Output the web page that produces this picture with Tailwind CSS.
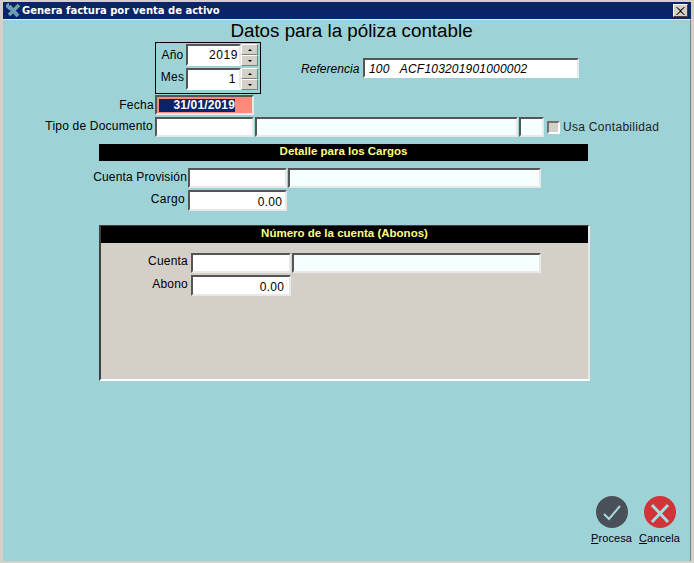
<!DOCTYPE html>
<html lang="en">
<head>
    <meta charset="UTF-8">
    <title>Genera factura por venta de activo</title>
    <script src="https://cdn.jsdelivr.net/npm/@tailwindcss/browser@4"></script>
</head>
<body class="overflow-hidden">
<div class="w-[694px] h-[563px] bg-[#d4d0c8] pt-[2px] pl-[3px] pr-[3px] pb-[2px] flex flex-col font-['Liberation_Sans',sans-serif] text-[12px] leading-[14px] text-black">

    <!-- Title bar -->
    <div class="h-[17px] shrink-0 bg-[#0a246a] flex items-center justify-between pr-[3px] text-white">
        <div class="flex items-center">
            <svg class="w-[17px] h-[17px] ml-[2px]" viewBox="0 0 17 17">
                <path d="M4 4l9 10" fill="none" stroke="#6f9fb5" stroke-width="4"/>
                <path d="M14 3l-10 10" fill="none" stroke="#6f9fb5" stroke-width="3.500"/>
                <path d="M1 3l2-2 1 0 0 3 2-1 1 3-3 2-3-3z" fill="#6f9fb5"/>
            </svg>
            <span class="font-['DejaVu_Sans',sans-serif] font-bold text-[10px]">Genera factura por venta de activo</span>
        </div>
        <div class="w-[15px] h-[13px] bg-[#d4d0c8] border border-t-white border-l-white border-r-[#404040] border-b-[#404040] flex items-center justify-center">
            <svg class="w-[9px] h-[8px]" viewBox="0 0 9 8"><path d="M1 0l3.500 3 3.500-3 1 0-4 4 4 4-1 0-3.500-3-3.500 3-1 0 4-4-4-4z" fill="#000"/></svg>
        </div>
    </div>

    <!-- Form body -->
    <div class="flex-1 bg-[#9dd3d6] border-t border-t-[#e8e8e8] border-r border-r-[#808080] flex flex-col">
        <h1 class="text-[18.8px] leading-[21px] text-center pl-[10px]">Datos para la póliza contable</h1>

        <!-- Periodo + referencia -->
        <div class="flex mt-[1px] ml-[152px]">
            <div class="w-[106px] h-[52px] border border-black pt-[1px] pl-[3px]">
                <div class="flex items-center h-[22px]">
                    <span class="w-[27px] text-center tracking-[0.2px] pb-[1px]">Año</span>
                    <div class="w-[55px] h-[22px] bg-white border-2 border-t-[#555] border-l-[#555] border-r-[#e8e8e8] border-b-[#fff] text-right pr-[1px] pt-[2px] tracking-[0.6px]">2019</div>
                    <div class="w-[17px] h-[22px] flex flex-col">
                        <div class="h-[11px] bg-[#d4d0c8] border border-[#808080] border-t-white border-l-white flex items-center justify-center"><div class="w-0 h-0 border-x-[2px] border-x-transparent border-b-[2px] border-b-black"></div></div>
                        <div class="h-[11px] bg-[#d4d0c8] border border-[#808080] border-t-white border-l-white flex items-center justify-center"><div class="w-0 h-0 border-x-[2px] border-x-transparent border-t-[2px] border-t-black"></div></div>
                    </div>
                </div>
                <div class="flex items-center h-[22px] mt-[2px]">
                    <span class="w-[27px] text-center tracking-[0.2px] pb-[4px]">Mes</span>
                    <div class="w-[55px] h-[22px] bg-white border-2 border-t-[#555] border-l-[#555] border-r-[#e8e8e8] border-b-[#fff] text-right pr-[3px] pt-[2px] tracking-[0.6px]">1</div>
                    <div class="w-[17px] h-[22px] flex flex-col">
                        <div class="h-[11px] bg-[#d4d0c8] border border-[#808080] border-t-white border-l-white flex items-center justify-center"><div class="w-0 h-0 border-x-[2px] border-x-transparent border-b-[2px] border-b-black"></div></div>
                        <div class="h-[11px] bg-[#d4d0c8] border border-[#808080] border-t-white border-l-white flex items-center justify-center"><div class="w-0 h-0 border-x-[2px] border-x-transparent border-t-[2px] border-t-black"></div></div>
                    </div>
                </div>
            </div>
            <div class="flex items-start mt-[16px] ml-[40px]">
                <span class="italic mt-[4px] w-[59px] tracking-[0.05px]">Referencia</span>
                <div class="w-[216px] h-[20px] ml-[3px] bg-white border-2 border-t-[#555] border-l-[#555] border-r-[#e8e8e8] border-b-[#fff] italic pl-[4px] pt-[2px] whitespace-pre tracking-[0.2px]">100   ACF103201901000002</div>
            </div>
        </div>

        <!-- Fecha -->
        <div class="flex items-center mt-[1px] h-[20px]">
            <span class="w-[151px] text-right tracking-[0.3px]">Fecha</span>
            <div class="w-[99px] h-[20px] ml-[1px] bg-[#ff8a7a] border-2 border-t-[#555] border-l-[#555] border-r-[#e8e8e8] border-b-[#e8e8e8] pl-[2px] pt-[2px]">
                <span class="block w-[76px] h-[13px] bg-[#0a246a] text-white text-right font-bold text-[12px] leading-[13px] tracking-[0.15px]">31/01/2019</span>
            </div>
        </div>

        <!-- Tipo de documento -->
        <div class="flex items-center mt-[2px] h-[20px]">
            <span class="w-[150px] text-right tracking-[0.2px] pb-[3px]">Tipo de Documento</span>
            <div class="w-[99px] h-[20px] ml-[2px] bg-white border-2 border-t-[#555] border-l-[#555] border-r-[#e8e8e8] border-b-[#e8e8e8]"></div>
            <div class="w-[263px] h-[20px] ml-[1px] bg-[#f5ffff] border-2 border-t-[#555] border-l-[#555] border-r-[#e8e8e8] border-b-[#e8e8e8]"></div>
            <div class="w-[25px] h-[20px] ml-[1px] bg-[#f5ffff] border-2 border-t-[#555] border-l-[#555] border-r-[#e8e8e8] border-b-[#e8e8e8]"></div>
            <div class="w-[13px] h-[13px] ml-[3px] bg-[#d4d0c8] border-2 border-t-[#707070] border-l-[#707070] border-r-white border-b-white"></div>
            <span class="ml-[3px] text-[#222] tracking-[0.3px]">Usa Contabilidad</span>
        </div>

        <!-- Cargos -->
        <div class="w-[489px] h-[17px] ml-[96px] mt-[7px] bg-black text-[#ffff80] font-bold text-[11.5px] leading-[15px] text-center">Detalle para los Cargos</div>
        <div class="flex items-center mt-[7px] h-[20px]">
            <span class="w-[184px] text-right tracking-[0.15px] pb-[2px]">Cuenta Provisión</span>
            <div class="w-[99px] h-[20px] ml-[1px] bg-white border-2 border-t-[#555] border-l-[#555] border-r-[#e8e8e8] border-b-[#e8e8e8]"></div>
            <div class="w-[253px] h-[20px] ml-[1px] bg-[#f5ffff] border-2 border-t-[#555] border-l-[#555] border-r-[#e8e8e8] border-b-[#e8e8e8]"></div>
        </div>
        <div class="flex items-center mt-[2px] h-[21px]">
            <span class="w-[182px] text-right tracking-[0.3px] pb-[3px]">Cargo</span>
            <div class="w-[99px] h-[21px] ml-[3px] bg-white border-2 border-t-[#555] border-l-[#555] border-r-[#e8e8e8] border-b-[#e8e8e8] text-right pr-[3px] pt-[3px] tracking-[0.2px]">0.00</div>
        </div>

        <!-- Abonos -->
        <div class="w-[491px] h-[156px] ml-[96px] mt-[14px] bg-[#d4d0c8] border-t border-l-2 border-r-2 border-b-2 border-t-[#404040] border-l-[#404040] border-r-[#e8e8e8] border-b-white">
            <div class="h-[17px] bg-black text-[#ffff80] font-bold text-[11.5px] leading-[15px] text-center">Número de la cuenta (Abonos)</div>
            <div class="flex items-center mt-[10px] h-[20px]">
                <span class="w-[87px] text-right tracking-[0.2px] pb-[4px]">Cuenta</span>
                <div class="w-[100px] h-[20px] ml-[3px] bg-white border-2 border-t-[#555] border-l-[#555] border-r-[#e8e8e8] border-b-[#e8e8e8]"></div>
                <div class="w-[249px] h-[20px] ml-[1px] bg-[#f5ffff] border-2 border-t-[#555] border-l-[#555] border-r-[#e8e8e8] border-b-[#e8e8e8]"></div>
            </div>
            <div class="flex items-center mt-[2px] h-[21px]">
                <span class="w-[87px] text-right tracking-[0.2px] pb-[3px]">Abono</span>
                <div class="w-[100px] h-[21px] ml-[3px] bg-white border-2 border-t-[#555] border-l-[#555] border-r-[#e8e8e8] border-b-[#e8e8e8] text-right pr-[5px] pt-[3px] tracking-[0.2px]">0.00</div>
            </div>
        </div>

        <!-- Botones -->
        <div class="mt-auto mb-[16px] mr-[11px] flex justify-end gap-[8px]">
            <div class="w-[40px] flex flex-col">
                <svg class="w-[32px] h-[32px] ml-[5px]" viewBox="0 0 32 32">
                    <circle cx="16" cy="16" r="16" fill="#4a5058"/>
                    <path d="M8 18l5 5 11-13" fill="none" stroke="#a5dce0" stroke-width="2"/>
                </svg>
                <span class="mt-[3px] text-[11px] tracking-[0.1px] text-center"><u>P</u>rocesa</span>
            </div>
            <div class="w-[40px] flex flex-col">
                <svg class="w-[32px] h-[32px] ml-[5px]" viewBox="0 0 32 32">
                    <circle cx="16" cy="16" r="16" fill="#d13438"/>
                    <path d="M8 9l16 17M24 9l-16 17" fill="none" stroke="#a5dce0" stroke-width="3"/>
                </svg>
                <span class="mt-[3px] text-[11px] tracking-[0.1px] text-center"><u>C</u>ancela</span>
            </div>
        </div>
    </div>
</div>
</body>
</html>
